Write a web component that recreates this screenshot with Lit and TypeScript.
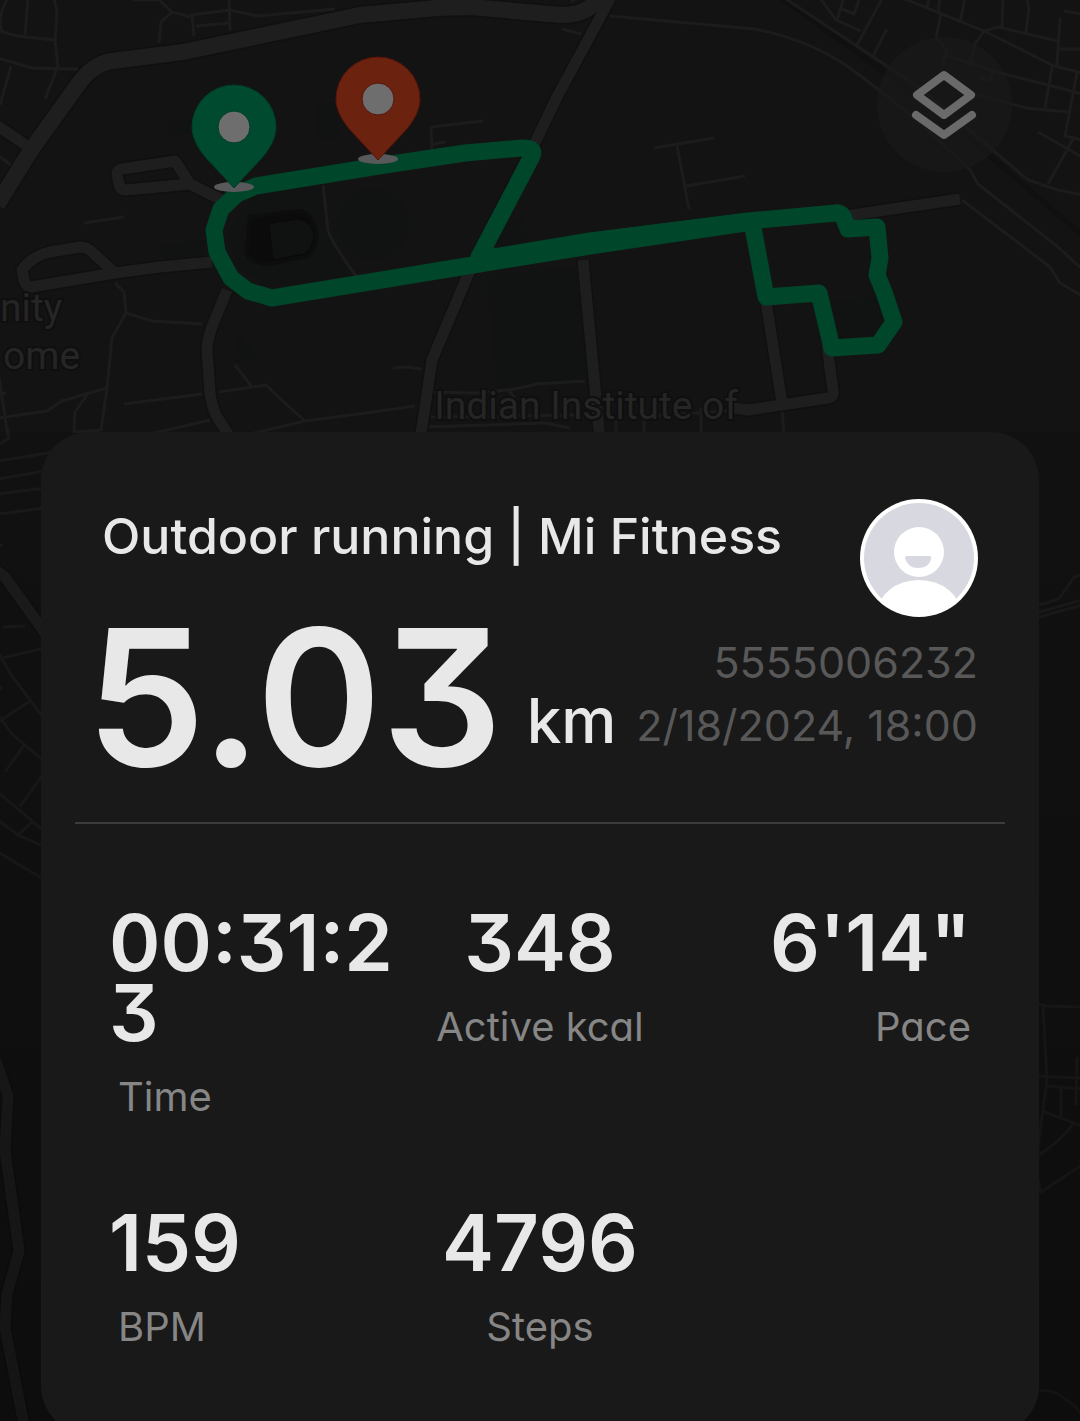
import { LitElement, html, svg, css } from "lit";
import { customElement, property } from "lit/decorators.js";

interface Metric {
  value: string;
  label: string;
}

const METRICS: Metric[] = [
  { value: "00:31:23", label: "Time" },
  { value: "348", label: "Active kcal" },
  { value: "6'14\"", label: "Pace" },
  { value: "159", label: "BPM" },
  { value: "4796", label: "Steps" },
];

/* Map geometry, drawn on a 1080 x 1421 canvas. */
const HIGHWAYS = [
  "M-3 205L31 150L77 86Q92 64 112 61L183 52L360 15L437 8L470 7L560 15Q580 15 590 7L604 -5",
];

const STREETS = [
  "M612 -5L597 23L557 97L533 147L467 277L432 360L420 440",
  "M583 260L600 440",
  "M765 295L782 403",
  "M827 345L833 391Q834 397 828 398L748 410L733 408",
  "M845 216L960 199",
  "M-5 124L30 148",
  "M222 200L190 184L126 190Q120 190 119 184L117 174Q117 170 122 169L175 161L190 184",
  "M212 262L160 267L115 273L31 287Q26 287 24 280L22 270Q32 256 50 252L80 247Q88 247 93 253L115 273",
  "M227 290L212 327Q207 340 207 350L210 393Q212 407 217 417L230 437",
  "M-4 570L5 577L45 633",
  "M-4 1060L8 1096L5 1150L19 1251L7 1294L5 1328L24 1425",
];

const LANES = [
  "M8 -2Q0 10 0 25L2 32L18 36L54 40M28 -2L25 35M54 -2L57 12L55 42L58 66L45 99M-2 58L32 68L78 69M11 66L0 105M-2 155L12 166",
  "M157 -2L172 12L190 17M172 12L161 22L159 43M132 0L157 0M190 15L230 10L257 16L335 9M192 15L194 36M196 26L229 23M229 -2L230 30",
  "M84 223L124 217M115 283L124 292L126 313L112 338L107 388L101 431M126 313L152 321L202 324M-2 418L47 411L62 401L107 388M87 395L75 412L74 432L101 430M-2 370L8 437M-2 395L6 393",
  "M124 404L202 394M219 392L266 385L286 404L305 421L366 413L415 406M235 365L252 387M150 434L210 420M250 434L305 421",
  "M323 185L328 230Q330 240 356 276M432 150L431 127L483 121M433 144L445 142M393 368L407 367L421 369",
  "M430 392L478 393L515 389L537 384L585 381M430 417L580 415M425 427L545 423L570 428M508 390L515 398M616 415V432M644 415V432M701 408V432M655 416L740 410",
  "M562 29L581 34M571 2L577 -2",
  "M654 148L714 138M677 146L689 209M686 186L745 176",
  "M610 16L755 29Q810 40 850 68Q900 105 935 137L970 170L978 184L1058 247L1082 269M962 200L1050 267L1060 283L1082 296",
  "M783 -3L920 88L1028 180L1058 190L1082 195M820 -2L836 20L861 31M844 -3L837 20M842 9L854 14L859 0M883 -3L857 45M887 29L872 58",
  "M900 -3L984 31L1054 66L1082 73M941 14L936 38L947 50L943 65M927 8L929 -2M938 13L940 -2M960 23L965 -2M984 31L998 27L1058 41M1002 28L1003 -2M1026 32L1029 8L1026 -3M984 31L975 44L971 62M945 55L1000 73L1060 88L1082 94M960 88L975 94L1026 108L1068 112M1052 67L1045 108M1060 18L1057 65M1064 11L1082 14M1060 49H1082M1077 73L1065 136L1082 140M1073 139L1048 184M1038 132L1082 157M979 78L990 80L993 72",
  "M782 410L784 432",
  "M-2 461L60 451M-2 479L45 471M-2 494L45 488M-2 514L45 508M-2 445L9 438L8 428M-2 545L3 545M3 627L25 626M-2 659L45 648M-2 652L12 676L42 716M-2 688L2 688M-2 722L30 701M-2 715L12 734L45 762M25 744L5 772M-2 792L45 832M45 772L20 806M-2 820L18 835L32 822M18 835L45 847M-2 852L45 880",
  "M1036 606L1057 600Q1061 597 1074 577L1082 574M1036 613L1082 600M1036 618L1082 605",
  "M1036 1003L1047 1006L1082 1007M1043 1006L1047 1079L1037 1155M1036 1076L1082 1078M1047 1086L1082 1089M1061 1088V1118M1077 1057L1076 1105M1042 1111L1082 1126M1074 1123Q1060 1142 1036 1157M1036 1173L1041 1192L1082 1165M1036 1193L1041 1192",
  "M1036 1392Q1047 1388 1058 1394L1074 1405L1082 1415",
];

const ROUTE =
  "M256 186L385 165L465 153L521 148Q536 147 532 156L479 257L500 256L590 241L748 221L836 213Q842 212 844 219L848 229L877 227L880 258L877 275L884 292L894 322L878 345L832 348L819 293L766 297L752 222L590 246L479 264L272 298L248 291L231 278L217 252L214 230L221 209L237 194Z";

const mapPin = (x: number, y: number, fill: string, edge: string) => svg`
  <g transform="translate(${x} ${y})">
    <ellipse cx="0" cy="0" rx="20" ry="5" fill="#58595a" />
    <path
      d="M0 1L-26 -27C-36 -38 -42 -49 -42 -60A42 42 0 0 1 42 -60C42 -49 36 -38 26 -27Z"
      fill=${fill} stroke=${edge} stroke-width="1" />
    <circle cx="0" cy="-60" r="16" fill="#6e6e6e" stroke=${edge} stroke-width="1" />
  </g>`;

@customElement("route-map")
export class RouteMap extends LitElement {
  static styles = css`
    :host {
      display: block;
    }
    .canvas {
      display: block;
      width: 100%;
      height: 100%;
    }
    .casing {
      fill: none;
      stroke: #101010;
      stroke-linejoin: round;
    }
    .road {
      fill: none;
      stroke: #1e1e1e;
      stroke-linejoin: round;
    }
    .lane {
      fill: none;
      stroke: #1c1c1c;
      stroke-width: 3px;
    }
    .place {
      font-family: Roboto, "Liberation Sans", sans-serif;
      font-size: 39px;
      font-weight: 400;
      fill: #252525;
      stroke: #0f0f0f;
      stroke-width: 4px;
      paint-order: stroke;
    }
  `;

  render() {
    return html`
      <svg
        class="canvas"
        viewBox="0 0 1080 1421"
        preserveAspectRatio="xMidYMin slice"
        role="img"
        aria-label="Route map"
      >
        <defs>
          <linearGradient id="shade" x1="0" y1="0" x2="0" y2="1">
            <stop offset="0" stop-color="#000" stop-opacity="0.1" />
            <stop offset="1" stop-color="#000" stop-opacity="0.32" />
          </linearGradient>
        </defs>
        <rect width="1080" height="1421" fill="#131313" />
        <g fill="#101312">
          <path d="M487 275L575 268L587 381L498 388Z" />
          <path d="M500 225L524 218L528 245L495 252Z" />
          <circle cx="373" cy="224" r="36" />
          <path d="M256 192L322 184L328 230L350 275L272 286L240 270L226 235Z" />
          <path d="M168 121L192 119V133L169 135Z" />
          <path d="M315 105L335 103L340 138L320 140Z" />
          <path d="M161 246L205 240V254L163 258Z" />
          <path d="M240 335L259 357L233 362Z" />
          <path d="M832 303L880 296L888 322L876 340L838 342Z" />
        </g>
        <path
          d="M250 217L298 211Q304 211 309 216Q316 226 316 236Q316 250 307 256L268 264Q246 262 247 250Z"
          fill="#0b0b0b" stroke="#0d0d0d" stroke-width="4" stroke-linejoin="round"
        />
        <path
          d="M269 224L298 219Q309 220 314 234Q313 248 304 254L273 260Z"
          fill="#101211" stroke="#0a0a0a" stroke-width="1"
        />
        <path d="M780 -3L930 105L1082 235" fill="none" stroke="#101010" stroke-width="5" />
        ${LANES.map((d) => svg`<path class="lane" d=${d} />`)}
        ${STREETS.map((d) => svg`<path class="casing" stroke-width="14" d=${d} />`)}
        ${HIGHWAYS.map((d) => svg`<path class="casing" stroke-width="19" d=${d} />`)}
        ${STREETS.map((d) => svg`<path class="road" stroke-width="11" d=${d} />`)}
        ${HIGHWAYS.map((d) => svg`<path class="road" stroke-width="16" d=${d} />`)}
        <text class="place" x="0" y="321">nity</text>
        <text class="place" x="3" y="369">ome</text>
        <text class="place" x="586" y="419" text-anchor="middle">Indian Institute of</text>
        <path
          d=${ROUTE} fill="none" stroke="#00462b" stroke-width="17"
          stroke-linejoin="round" stroke-linecap="round"
        />
        ${mapPin(234, 187, "#004b30", "#003c27")}
        ${mapPin(378, 159, "#6b2310", "#5a120a")}
        <rect y="432" width="1080" height="989" fill="url(#shade)" />
      </svg>
    `;
  }
}

@customElement("metric-tile")
export class MetricTile extends LitElement {
  @property() value = "";
  @property() label = "";

  static styles = css`
    :host {
      display: flex;
      flex-direction: column;
      gap: 19px;
    }
    .value {
      font-size: 78px;
      line-height: 70px;
      font-weight: 600;
      color: #e8e8e8;
      word-break: break-all;
    }
    .label {
      padding: 0 var(--label-inset, 0);
      font-size: 40px;
      line-height: 60px;
      font-weight: 400;
      color: #868686;
    }
  `;

  render() {
    return html`
      <div class="value">${this.value}</div>
      <div class="label">${this.label}</div>
    `;
  }
}

@customElement("app-root")
export class AppRoot extends LitElement {
  static styles = css`
    :host {
      display: block;
      position: relative;
      height: 100vh;
      overflow: hidden;
      background: #111111;
      font-family: Inter, "Liberation Sans", sans-serif;
      font-feature-settings: "cv09", "cv11";
      color: #e8e8e8;
    }
    .backdrop {
      position: absolute;
      inset: 0;
    }
    .layers {
      position: absolute;
      top: 37px;
      right: 68px;
      width: 135px;
      height: 135px;
      padding: 0;
      border: 0;
      border-radius: 50%;
      background: rgba(26, 26, 26, 0.7);
      cursor: pointer;
    }
    .layers svg {
      display: block;
      width: 100%;
    }
    .card {
      position: relative;
      margin: 432px 41px 0;
      padding: 67px 34px 77px;
      border-radius: 48px;
      background: #191919;
    }
    .summary {
      display: flex;
      flex-direction: column;
      padding: 0 27px 45px;
      border-bottom: 2px solid #3c3c3c;
    }
    .row {
      display: flex;
      justify-content: space-between;
      align-items: flex-start;
    }
    .title {
      margin: 0;
      padding-top: 6px;
      font-size: 50px;
      line-height: 62px;
      font-weight: 500;
    }
    .avatar {
      width: 118px;
      height: 118px;
      flex: none;
    }
    .distance {
      display: flex;
      align-items: flex-end;
      gap: 24px;
      margin: 0 0 0 -16px;
    }
    .number {
      font-size: 190px;
      line-height: 160px;
      font-weight: 600;
    }
    .unit {
      font-size: 62px;
      line-height: 112px;
      font-weight: 500;
    }
    .meta {
      padding-top: 14px;
      font-size: 43px;
      line-height: 63px;
      font-weight: 400;
      text-align: right;
      color: #585858;
      white-space: nowrap;
    }
    .metrics {
      display: grid;
      grid-template-columns: repeat(3, 1fr);
      gap: 81px 0;
      padding: 84px 34px 0;
    }
    .metrics metric-tile:nth-child(3n + 1) {
      --label-inset: 9px;
    }
    .metrics metric-tile:nth-child(3n + 2) {
      text-align: center;
    }
    .metrics metric-tile:nth-child(3n) {
      text-align: right;
    }
  `;

  render() {
    return html`
      <route-map class="backdrop"></route-map>
      <button class="layers" type="button" aria-label="Map layers">
        <svg viewBox="0 0 135 135" fill="none" stroke="#6a6a6a" stroke-linecap="round">
          <path d="M67 38L94 58L67 78L40 58Z" stroke-width="8" stroke-linejoin="round" />
          <path d="M39 78L67 98L95 78" stroke-width="8" stroke-linejoin="round" />
        </svg>
      </button>
      <main class="card">
        <header class="summary">
          <div class="row">
            <h1 class="title">Outdoor running | Mi Fitness</h1>
            <svg class="avatar" viewBox="0 0 118 118" role="img" aria-label="Profile picture">
              <defs>
                <clipPath id="disc"><circle cx="59" cy="59" r="57" /></clipPath>
              </defs>
              <circle cx="59" cy="59" r="59" fill="#fff" />
              <circle cx="59" cy="59" r="55" fill="#d8d8e0" />
              <circle cx="59" cy="53" r="25" fill="#fff" />
              <path d="M45 59Q45 57 48 57H69Q72 57 71 60Q69 69 58 69Q48 69 45 59Z" fill="#d8d8e0" />
              <ellipse cx="59" cy="115" rx="42" ry="34" fill="#fff" clip-path="url(#disc)" />
            </svg>
          </div>
          <div class="row">
            <p class="distance"><span class="number">5.03</span><span class="unit">km</span></p>
            <div class="meta">
              <div>5555006232</div>
              <div>2/18/2024, 18:00</div>
            </div>
          </div>
        </header>
        <section class="metrics" aria-label="Workout metrics">
          ${METRICS.map((m) => html`<metric-tile .value=${m.value} .label=${m.label}></metric-tile>`)}
        </section>
      </main>
    `;
  }
}
